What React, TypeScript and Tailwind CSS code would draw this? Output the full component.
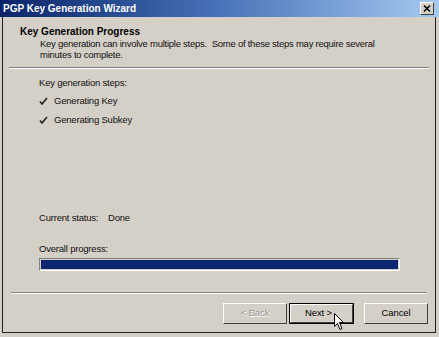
import React from 'react';

const font = { fontFamily: '"Liberation Sans", Arial, sans-serif' };

function Check() {
  return (
    <svg width="9" height="8" viewBox="0 0 9 8" className="shrink-0">
      <path d="M1 4.5 L3 7 L8 1" fill="none" stroke="#222" strokeWidth="1.6" />
    </svg>
  );
}

function Cursor() {
  return (
    <svg
      width="12"
      height="18"
      viewBox="0 0 12 18"
      className="absolute left-[334px] top-[313px]"
    >
      <path
        d="M0.5 0.5 L0.5 13.5 L3.5 10.5 L6 16.5 L8 15.5 L5.5 9.5 L9.5 9.5 Z"
        fill="#fff"
        stroke="#000"
        strokeWidth="1"
      />
    </svg>
  );
}

function Button({
  label,
  disabled,
  isDefault,
}: {
  label: string;
  disabled?: boolean;
  isDefault?: boolean;
}) {
  const inner = (
    <div className="h-full w-full border border-t-white border-l-white border-r-[#404040] border-b-[#404040] bg-[#d4d0c8] flex items-center justify-center">
      <span
        className={`text-[9.5px] tracking-[-0.1px] ${isDefault ? 'pr-[6px]' : ''} ${disabled ? 'text-[#9a9890] [text-shadow:1px_1px_0_#fff]' : 'text-black'}`}
      >
        {label}
      </span>
    </div>
  );
  if (isDefault) {
    return <div className="w-[65px] h-[21px] border border-black">{inner}</div>;
  }
  return <div className="w-[64px] h-[21px]">{inner}</div>;
}

export default function App() {
  return (
    <div className="relative w-[439px] h-[337px] bg-[#d4d0c8] flex flex-col" style={font}>
      {/* Title bar */}
      <div className="h-[17px] flex items-center justify-between pl-[3px] pr-[5px] bg-gradient-to-r from-[#0a246a] via-[#4a72b8] to-[#a6caf0]">
        <span className="text-white font-bold text-[10px]">PGP Key Generation Wizard</span>
        <div className="w-[14px] h-[13px] bg-[#d4d0c8] border border-t-white border-l-white border-r-[#404040] border-b-[#404040] flex items-center justify-center">
          <svg width="8" height="7" viewBox="0 0 8 7">
            <path d="M1 0.5 L7 6.5 M7 0.5 L1 6.5" stroke="#000" strokeWidth="1.5" />
          </svg>
        </div>
      </div>

      {/* Window body */}
      <div className="ml-[2px] mr-[3px] mb-[4px] flex-1 flex flex-col border-l border-r border-b border-[#202020]">
        {/* Header */}
        <div className="pt-[9px] pl-[17px]">
          <div className="font-bold text-[10px] leading-[12px] text-black">Key Generation Progress</div>
          <div className="pl-[20px] text-[9.5px] tracking-[-0.25px] leading-[11px] text-[#111]">
            Key generation can involve multiple steps.&nbsp; Some of these steps may require several
            <br />
            minutes to complete.
          </div>
        </div>

        <div className="mt-[7px] mx-[6px] border-t border-b border-t-[#808080] border-b-white" />

        {/* Content */}
        <div className="pl-[36px] pr-[36px] text-[9.5px] tracking-[-0.2px] leading-[12px] text-[#111] flex-1 flex flex-col">
          <div className="mt-[8px] h-[12px]">Key generation steps:</div>
          <div className="mt-[6px] h-[12px] flex items-center gap-[6px]">
            <Check />
            <span>Generating Key</span>
          </div>
          <div className="mt-[7px] h-[12px] flex items-center gap-[6px]">
            <Check />
            <span>Generating Subkey</span>
          </div>

          <div className="mt-auto flex">
            <span className="w-[69px]">Current status:</span>
            <span>Done</span>
          </div>
          <div className="mt-[19px]">Overall progress:</div>
          <div className="mt-[3px] h-[13px] w-[361px] border border-t-[#808080] border-l-[#808080] border-r-white border-b-white p-[1px]">
            <div className="h-full w-full bg-[#0c2770]" />
          </div>
        </div>

        <div className="mt-[21px] mx-[8px] border-t border-b border-t-[#808080] border-b-white" />

        {/* Buttons */}
        <div className="flex justify-end items-center pr-[7px] pt-[9px] pb-[8px]">
          <Button label="< Back" disabled />
          <div className="ml-[2px]">
            <Button label="Next >" isDefault />
          </div>
          <div className="ml-[10px]">
            <Button label="Cancel" />
          </div>
        </div>
      </div>

      <Cursor />
    </div>
  );
}
